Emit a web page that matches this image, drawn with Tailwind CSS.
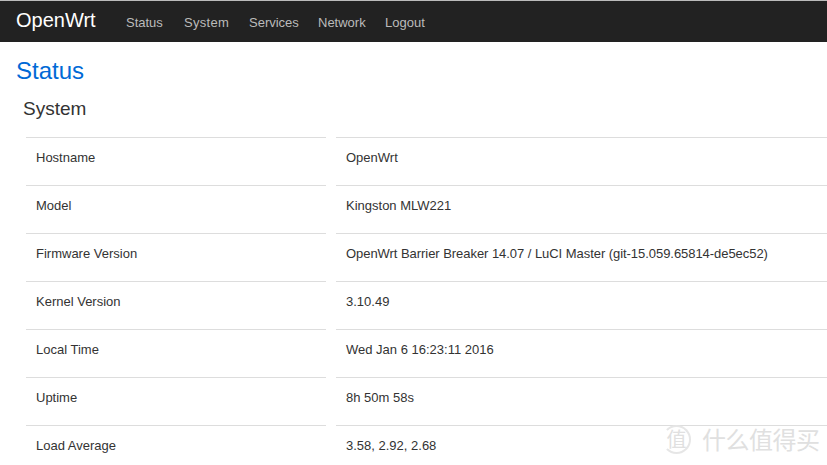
<!DOCTYPE html>
<html lang="en">

<head>
  <meta charset="UTF-8">
  <title>OpenWrt - Status</title>
  <script src="https://cdn.jsdelivr.net/npm/@tailwindcss/browser@4"></script>
</head>

<body class="bg-white h-[465px] overflow-hidden relative font-['Liberation_Sans',sans-serif] text-[13px] text-[#333]">
  <!-- Navbar -->
  <nav class="h-[42px] bg-[#222] border-t border-t-[#bbb] flex items-center pl-4">
    <a class="text-white text-[20px] leading-[24px] w-[110px] -mt-[3px]">OpenWrt</a>
    <div class="flex gap-5 text-[#bbb] text-[13px] leading-5 mt-[2px]">
      <a class="w-[38px]">Status</a>
      <a class="w-[45px] tracking-[0.3px]">System</a>
      <a class="w-[49px]">Services</a>
      <a class="w-[47px]">Network</a>
      <a>Logout</a>
    </div>
  </nav>

  <main class="pl-4">
    <h1 class="text-[#0069d6] text-[24px] leading-[30px] pt-[14px]">Status</h1>
    <h2 class="text-[19px] leading-6 pl-[7px] mt-[11px] mb-4">System</h2>

    <div class="flex flex-col pl-[10px]">
      <div class="grid grid-cols-[300px_1fr] gap-x-[10px] h-[48px]">
        <div class="border-t border-[#ddd] pl-[10px] pt-[10px] leading-5">Hostname</div>
        <div class="border-t border-[#ddd] pl-[10px] pt-[10px] leading-5">OpenWrt</div>
      </div>
      <div class="grid grid-cols-[300px_1fr] gap-x-[10px] h-[48px]">
        <div class="border-t border-[#ddd] pl-[10px] pt-[10px] leading-5">Model</div>
        <div class="border-t border-[#ddd] pl-[10px] pt-[10px] leading-5">Kingston MLW221</div>
      </div>
      <div class="grid grid-cols-[300px_1fr] gap-x-[10px] h-[48px]">
        <div class="border-t border-[#ddd] pl-[10px] pt-[10px] leading-5">Firmware Version</div>
        <div class="border-t border-[#ddd] pl-[10px] pt-[10px] leading-5 -tracking-[0.05px]">OpenWrt Barrier Breaker 14.07 / LuCI Master (git-15.059.65814-de5ec52)</div>
      </div>
      <div class="grid grid-cols-[300px_1fr] gap-x-[10px] h-[48px]">
        <div class="border-t border-[#ddd] pl-[10px] pt-[10px] leading-5">Kernel Version</div>
        <div class="border-t border-[#ddd] pl-[10px] pt-[10px] leading-5">3.10.49</div>
      </div>
      <div class="grid grid-cols-[300px_1fr] gap-x-[10px] h-[48px]">
        <div class="border-t border-[#ddd] pl-[10px] pt-[10px] leading-5">Local Time</div>
        <div class="border-t border-[#ddd] pl-[10px] pt-[10px] leading-5">Wed Jan 6 16:23:11 2016</div>
      </div>
      <div class="grid grid-cols-[300px_1fr] gap-x-[10px] h-[48px]">
        <div class="border-t border-[#ddd] pl-[10px] pt-[10px] leading-5">Uptime</div>
        <div class="border-t border-[#ddd] pl-[10px] pt-[10px] leading-5">8h 50m 58s</div>
      </div>
      <div class="grid grid-cols-[300px_1fr] gap-x-[10px] h-[48px]">
        <div class="border-t border-[#ddd] pl-[10px] pt-[10px] leading-5">Load Average</div>
        <div class="border-t border-[#ddd] pl-[10px] pt-[10px] leading-5">3.58, 2.92, 2.68</div>
      </div>
    </div>
  </main>

  <!-- Watermark -->
  <div class="absolute left-[662px] top-[424px] flex items-center text-[#e0e0e0] font-['Noto_Sans_CJK_SC',sans-serif]">
    <div class="w-[29px] h-[29px] rounded-full border-2 border-[#e6e6e6] border-l-white/0 flex items-center justify-center text-[20px] leading-none bg-white/60">值</div>
    <div class="ml-[11px] text-[24px] leading-[30px] -tracking-[0.5px] whitespace-nowrap">什么值得买</div>
  </div>
</body>

</html>
